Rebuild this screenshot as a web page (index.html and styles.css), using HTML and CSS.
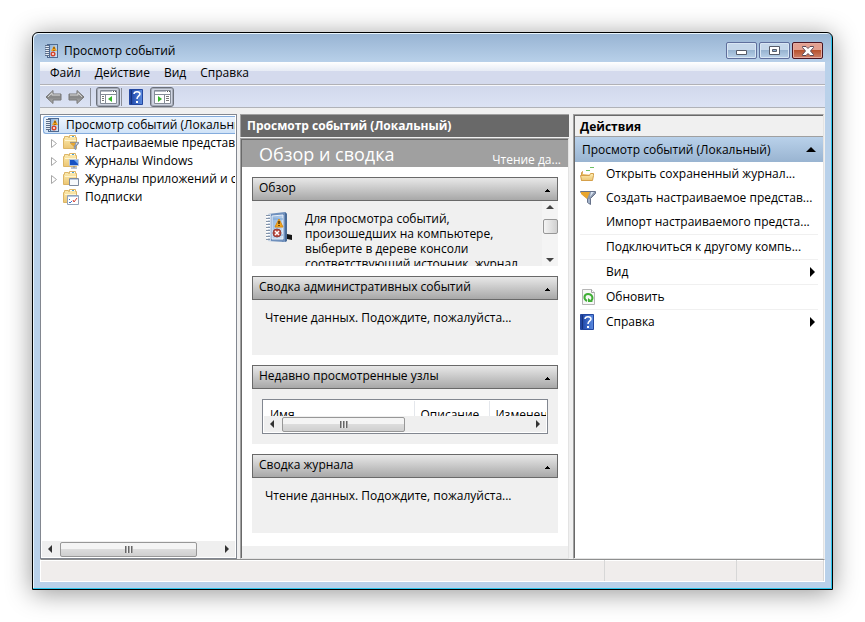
FILE: index.html
```html
<!DOCTYPE html>
<html lang="ru">
<head>
<meta charset="utf-8">
<title>Просмотр событий</title>
<link rel="stylesheet" href="styles.css">
</head>
<body>
<svg class="defs" aria-hidden="true">
  <defs>
    <linearGradient id="gold" x2="0" y2="1"><stop stop-color="#fdeeb5"/><stop offset="1" stop-color="#ecc673"/></linearGradient>
    <linearGradient id="arrow" x2="0" y2="1"><stop stop-color="#c4c4c4"/><stop offset=".5" stop-color="#858585"/><stop offset="1" stop-color="#b8b8b8"/></linearGradient>
    <linearGradient id="help" x2="1"><stop stop-color="#1d3f97"/><stop offset=".3" stop-color="#2a54b5"/><stop offset="1" stop-color="#5b8be0"/></linearGradient>
    <linearGradient id="page" x2="1" y2="1"><stop stop-color="#8fb3dc"/><stop offset="1" stop-color="#d2e4f6"/></linearGradient>
  </defs>
  <symbol id="i-book" viewBox="0 0 16 16">
    <path d="M3 1h11v14H3z" fill="#4e6a92"/><path d="M4 2h1v12H4z" fill="#dce6f2"/><path d="M6 2h7v12H6z" fill="url(#page)"/>
    <path d="M1 2.500h4M1 4.500h4M1 6.500h4M1 8.500h4M1 10.500h4M1 12.500h4" stroke="#5d6f89"/><path d="M2 3.500h2M2 5.500h2M2 7.500h2M2 9.500h2M2 11.500h2" stroke="#e9eef5"/>
    <path d="M10 2.500L13 8H7z" fill="#f2a21c"/><path d="M10 4v2M10 7v1" stroke="#5b3200"/>
    <circle cx="9" cy="11" r="2.500" fill="#d5452e"/><path d="M8 10l2 2M10 10l-2 2" stroke="#f6c9c0"/>
  </symbol>
  <symbol id="i-folder" viewBox="0 0 16 16">
    <path d="M.500 13.500v-10h1v-2h4v1h1v-2h6v2h1v11z" fill="url(#gold)" stroke="#dcb566"/><path d="M7 1.500h5" stroke="#fff"/><path d="M9 1.500h2" stroke="#4aa0d8"/><path d="M2 5.500h11" stroke="#fff5cf"/>
  </symbol>
  <symbol id="i-funnel" viewBox="0 0 16 16">
    <path d="M.500 1.500h15v2l-5 5v6l-3-2v-4l-6-5z" fill="#8b98ae" stroke="#67728a"/><path d="M1 2h9l-3 7-6-5z" fill="#e9a62e"/><path d="M11 2h3l-4 5z" fill="#d9e4f2"/><path d="M9 9v4" stroke="#b9cce4"/>
  </symbol>
  <symbol id="i-help" viewBox="0 0 14 16">
    <path d="M.500.500h13v15H.500z" fill="url(#help)" stroke="#2347a0"/><path d="M2.500 1v14" stroke="#17337e"/>
    <path d="M5 5c0-3 6-3 6 0 0 2-3 2-3 5" fill="none" stroke="#fff" stroke-width="1.500"/><path d="M7 12h2v2H7z" fill="#fff"/>
  </symbol>
  <symbol id="i-arrow" viewBox="0 0 17 16">
    <path d="M1 8l7-6.500V5h8v6H8v3.500z" fill="url(#arrow)" stroke="#777"/><path d="M3 8l4-4v2h8" fill="none" stroke="#d2d2d2"/>
  </symbol>
  <symbol id="i-pane" viewBox="0 0 17 14">
    <path d="M.500.500h16v13H.500z" fill="#fff" stroke="#858c98"/><path d="M1 1.500h11" stroke="#b5bac5"/><path d="M13 1.500h1M15 1.500h1" stroke="#555"/><path d="M1 4.500h15" stroke="#858c98"/>
  </symbol>
  <symbol id="i-tri" viewBox="0 0 5 3"><path d="M2 0h1v1h1v1h1v1H0V2h1V1h1z"/></symbol>
</svg>

<main class="window">
  <header class="titlebar">
    <svg class="ico16"><use href="#i-book"/></svg>
    <h1>Просмотр событий</h1>
    <div class="controls">
      <button class="ctl" aria-label="Свернуть"><svg class="low" width="11" height="5"><path d="M.500.500h10v4H.500z" fill="#fff" stroke="#555b68"/></svg></button>
      <button class="ctl" aria-label="Развернуть"><svg width="11" height="9"><path d="M.500.500h10v8H.500z" fill="#fff" stroke="#555b68"/><path d="M3.500 3.500h4v2h-4z" fill="#8badd0" stroke="#555b68"/></svg></button>
      <button class="ctl close" aria-label="Закрыть"><svg width="12" height="10"><path d="M.500.500h3.500L6 2.500l2-2h3.500v1l-3 3.500 3 3.500v1H8l-2-2-2 2H.500v-1l3-3.500-3-3.500z" fill="#fff" stroke="#5c4a58"/></svg></button>
    </div>
  </header>

  <div class="client">
    <nav class="menubar">
      <button>Файл</button><button>Действие</button><button>Вид</button><button>Справка</button>
    </nav>
    <div class="toolbar">
      <button class="tool" aria-label="Назад"><svg width="17" height="16"><use href="#i-arrow"/></svg></button>
      <button class="tool" aria-label="Вперед"><svg class="flip" width="17" height="16"><use href="#i-arrow"/></svg></button>
      <span class="tsep"></span>
      <button class="tool pressed" aria-label="Дерево консоли"><svg width="17" height="14"><use href="#i-pane"/><path d="M5.500 5v8M9.500 5" stroke="#858c98"/><path d="M2 6.500h2M2 8.500h2M2 10.500h2" stroke="#777"/><path d="M12 6v6L8 9z" fill="#36b52b"/></svg></button>
      <span class="tsep"></span>
      <button class="tool help" aria-label="Справка"><svg width="14" height="16"><use href="#i-help"/></svg></button>
      <button class="tool pressed" aria-label="Панель действий"><svg width="17" height="14"><use href="#i-pane"/><path d="M10.500 5v8" stroke="#858c98"/><path d="M12 6.500h3M12 8.500h3M12 10.500h3" stroke="#777"/><path d="M4 6v6l4-3z" fill="#36b52b"/></svg></button>
    </div>

    <div class="panes">
      <section class="tree">
        <ul>
          <li class="root"><svg class="ico16"><use href="#i-book"/></svg><span>Просмотр событий (Локальный)</span></li>
          <li><svg class="twist" viewBox="0 0 6 9"><path d="M.500.500v8l5-4z"/></svg><svg class="ico16"><use href="#i-folder"/><svg x="7" y="6" width="9" height="10"><use href="#i-funnel"/></svg></svg><span>Настраиваемые представления</span></li>
          <li><svg class="twist" viewBox="0 0 6 9"><path d="M.500.500v8l5-4z"/></svg><svg class="ico16"><use href="#i-folder"/><path d="M6.500 6.500h9v6h-9z" fill="#1752c4" stroke="#b9c6dc"/><path d="M11 7h4v4z" fill="#6ba5f0"/><path d="M8 15h6M11 13v2" stroke="#7d889c"/></svg><span>Журналы Windows</span></li>
          <li><svg class="twist" viewBox="0 0 6 9"><path d="M.500.500v8l5-4z"/></svg><svg class="ico16"><use href="#i-folder"/><path d="M6.500 7.500h9v7h-9z" fill="#f7f9fc" stroke="#7f8b9e"/><path d="M7 8.500h8" stroke="#bccbe0"/></svg><span>Журналы приложений и служб</span></li>
          <li><span class="twist"></span><svg class="ico16"><use href="#i-folder"/><path d="M4.500 6.500h11v9h-11z" fill="#fff" stroke="#94a2b8"/><path d="M5 7.500h10" stroke="#b8c8df"/><path d="M6 10.500h1M8 12.500h1M6 13.500h2" stroke="#3975cf"/><path d="M10 11l1 2 3-4" fill="none" stroke="#d33d33"/></svg><span>Подписки</span></li>
        </ul>
        <div class="hscroll"><i class="left"></i><b class="thumb"></b><i class="right"></i></div>
      </section>

      <section class="center">
        <h2>Просмотр событий (Локальный)</h2>
        <div class="summary">
          <div class="banner"><h3>Обзор и сводка</h3><span>Чтение да...</span></div>
          <div class="cards">
            <article class="card">
              <button class="cardhead">Обзор<svg width="5" height="3"><use href="#i-tri"/></svg></button>
              <div class="overview">
                <svg class="bigbook" viewBox="0 0 28 32"><path d="M18 25h4v-2l5 1v5l-5-1-5 3z" fill="#171717"/><path d="M3 3l17-2 2 2v27l-3 1-16-1z" fill="#6f90bd"/><path d="M20 1l2 2v27l-2 1z" fill="#4a6c98"/><path d="M3 3h3v27H3z" fill="#c7d5e6"/><path d="M7 5l11-1v24H7z" fill="url(#page)" stroke="#e8f0fa"/><path d="M8 8h10M8 24h10" stroke="#7da4d2"/><path d="M1 4.500h4M1 7.500h4M1 10.500h4M1 13.500h4M1 16.500h4M1 19.500h4M1 22.500h4M1 25.500h4M1 28.500h4" stroke="#8494aa"/><path d="M1 5.500h4M1 8.500h4M1 11.500h4M1 14.500h4M1 17.500h4M1 20.500h4M1 23.500h4M1 26.500h4" stroke="#fff"/><path d="M14 8l4 8h-8z" fill="#f4a81f" stroke="#d98a12"/><path d="M14 10v3M14 14v1" stroke="#4d2c00" stroke-width="1.500"/><circle cx="12" cy="22" r="4" fill="#b9493f" stroke="#963d36"/><path d="M10 20l4 4M14 20l-4 4" stroke="#fff" stroke-width="1.500"/></svg>
                <p>Для просмотра событий, произошедших на компьютере, выберите в дереве консоли соответствующий источник, журнал</p>
                <div class="vscroll"><i class="up"></i><b class="thumb"></b><i class="down"></i></div>
              </div>
            </article>
            <article class="card">
              <button class="cardhead">Сводка административных событий<svg width="5" height="3"><use href="#i-tri"/></svg></button>
              <p class="wait">Чтение данных. Подождите, пожалуйста...</p>
            </article>
            <article class="card">
              <button class="cardhead">Недавно просмотренные узлы<svg width="5" height="3"><use href="#i-tri"/></svg></button>
              <div class="nodes">
                <div class="listbox">
                  <div class="clip"><table><thead><tr><th class="cname">Имя</th><th class="cdesc">Описание</th><th>Изменен</th></tr></thead></table></div>
                  <div class="hscroll"><i class="left"></i><b class="thumb"></b><i class="right"></i></div>
                </div>
              </div>
            </article>
            <article class="card">
              <button class="cardhead">Сводка журнала<svg width="5" height="3"><use href="#i-tri"/></svg></button>
              <p class="wait">Чтение данных. Подождите, пожалуйста...</p>
            </article>
          </div>
          <div class="under"></div>
        </div>
      </section>

      <aside class="actions">
        <h2>Действия</h2>
        <button class="group">Просмотр событий (Локальный)<svg width="10" height="5"><path d="M5 0l5 5H0z"/></svg></button>
        <ul>
          <li><button><svg class="ico16"><path d="M1.500 14.500v-8h1v-1h4l1 1h4v8z" fill="#e9bd63" stroke="#cf9f4a"/><path d="M3 8V5h8l1 1v3z" fill="#fff"/><path d="M.500 9.500h9l1-2h3v2l-1 5H1.500z" fill="url(#gold)" stroke="#d5a04a"/><path d="M6 4.500h4M10 1.500h4" stroke="#6fc163"/></svg><span>Открыть сохраненный журнал...</span></button></li>
          <li><button><svg class="ico16"><use href="#i-funnel"/></svg><span>Создать настраиваемое представ...</span></button></li>
          <li><button><span class="ico16"></span><span>Импорт настраиваемого предста...</span></button></li>
          <li class="line"><button><span class="ico16"></span><span>Подключиться к другому компь...</span></button></li>
          <li class="line"><button><span class="ico16"></span><span>Вид</span><svg class="more" width="5" height="10"><path d="M0 0l5 5-5 5z"/></svg></button></li>
          <li class="line"><button><svg class="ico16"><path d="M2.500.500h9l3 3v12h-12z" fill="#f7f7f7" stroke="#b5b5b5"/><path d="M11.500.500v3h3" fill="#fff" stroke="#a5a5a5"/><path d="M7 12c-4-2-3-7 1-7s6 4 3 7" fill="none" stroke="#3fae35" stroke-width="2"/><path d="M8 9v4h5z" fill="#3fae35"/></svg><span>Обновить</span></button></li>
          <li class="line"><button><svg class="ico16"><svg width="14" height="16"><use href="#i-help"/></svg></svg><span>Справка</span><svg class="more" width="5" height="10"><path d="M0 0l5 5-5 5z"/></svg></button></li>
        </ul>
      </aside>
    </div>

    <footer class="status"><span></span><span></span><span></span></footer>
  </div>
</main>
</body>
</html>
```
FILE: styles.css
```css
* { box-sizing: border-box; margin: 0; padding: 0; }
body {
  display: flex;
  min-height: 100vh;
  padding: 32px;
  background: #fff;
  color: #000;
  font: 12px/16px "Open Sans", "Noto Sans", sans-serif;
}
ul { list-style: none; }
h1, h2, h3 { font-size: 12px; font-weight: 400; }
button { border: 0; background: none; color: inherit; font: inherit; text-align: left; white-space: nowrap; }
svg { flex: none; }
.defs { position: absolute; width: 0; height: 0; }
.ico16 { flex: none; width: 16px; height: 16px; }
.flip { transform: scaleX(-1); }

.window {
  flex: 1;
  min-width: 0;
  display: flex;
  flex-direction: column;
  padding: 0 7px 7px;
  border: 1px solid #000;
  border-radius: 6px 6px 0 0;
  background: linear-gradient(#97b3d2, #b9d1ea 30px, #b9d1ea);
  box-shadow: inset -1px -1px #2cc5ec, inset 1px 1px #e9f5fc, 0 3px 26px rgba(0, 0, 0, .42);
}
.titlebar { display: flex; align-items: center; gap: 4px; height: 29px; padding: 6px 2px 0; }
.titlebar h1 { flex: 1; }
.titlebar .ico16 { margin-left: 2px; }
.controls { display: flex; gap: 2px; }
.ctl {
  display: flex;
  align-items: center;
  justify-content: center;
  width: 31px;
  height: 17px;
  border: 1px solid #5f6f9c;
  border-radius: 2px;
  background: linear-gradient(#c5d7ea 45%, #98b4d1 50%, #b9d1e9);
  box-shadow: inset 0 0 0 1px #d8e6f4;
}
.ctl .low { margin-top: 4px; }
.ctl.close { border-color: #4b1420; background: linear-gradient(#e3a090 45%, #b8532f 50%, #cd8069); box-shadow: inset 0 0 0 1px #e5aba0; }

.client { flex: 1; min-width: 0; display: flex; flex-direction: column; background: #f0f0f0; }
.menubar {
  display: flex;
  height: 23px;
  padding: 0 3px;
  border-bottom: 1px solid #b1b1b6;
  background: linear-gradient(#fff, #e6ebf5 9px, #d4daed 9px, #d4daed);
}
.menubar button { padding: 0 7px; }
.toolbar {
  display: flex;
  align-items: center;
  gap: 5px;
  height: 23px;
  padding: 0 4px;
  border-top: 1px solid #f7f8fb;
  border-bottom: 1px solid #b0b2b8;
  background: linear-gradient(#d1d8ec, #dce3f4);
}
.tool { display: flex; align-items: center; justify-content: center; min-width: 18px; height: 20px; }
.tool.pressed { width: 24px; border: 1px solid #6c717b; border-radius: 3px; background: #d0d5e2; box-shadow: inset 0 0 0 1px #a4aab7; }
.tool.help { width: 24px; margin: 0 -3px; }
.tsep { width: 1px; height: 18px; background: #8a8e98; }
.tool.pressed + .tsep { margin-left: -4px; }

.panes { flex: 1; display: grid; grid-template-columns: 197px minmax(0, 329fr) minmax(0, 252fr); column-gap: 3px; padding: 6px 1px 0 0; }

.tree { display: flex; flex-direction: column; min-width: 0; border: 1px solid #828790; background: #fff; padding: 1px; }
.tree ul { flex: 1; overflow: hidden; }
.tree li { display: flex; align-items: center; height: 18px; padding-left: 8px; white-space: nowrap; overflow: hidden; }
.tree li .ico16 { margin: 0 6px 0 5px; }
.tree .twist { flex: none; width: 8px; height: 9px; fill: #fff; stroke: #a6a6a6; }
.tree .root { margin-left: 1px; padding-left: 0; border: 1px solid #84acdd; border-right: 0; border-radius: 3px 0 0 3px; background: linear-gradient(#edf5fd, #cfe2f7); }
.tree .root .ico16 { margin: 0 5px 0 1px; }

.hscroll { display: flex; align-items: center; height: 16px; background: #efefef; }
.thumb { border: 1px solid #979797; border-radius: 2px; background: linear-gradient(#f4f4f4 45%, #dcdcdc 50%, #cfcfcf); }
.hscroll .thumb { display: flex; align-items: center; justify-content: center; height: 15px; }
.hscroll .thumb::after { content: ""; width: 8px; height: 7px; background: repeating-linear-gradient(90deg, #666 0 1px, #aaa 1px 2px, #eee 2px 3px); }
.tree .hscroll .thumb { flex: 0 0 137px; }
.left, .right, .up, .down { border: 4px solid transparent; width: 0; height: 0; }
.left { margin-right: 8px; margin-left: 2px; border-right-color: #333; }
.right { margin: 0 2px 0 auto; border-left-color: #333; }
.up { border-bottom-color: #444; }
.down { border-top-color: #444; }

.center { display: flex; flex-direction: column; min-width: 0; }
.center > h2 { height: 23px; padding: 3px 6px; border: solid #a0a0a0; border-width: 1px 0 0 1px; background: #696969; color: #fff; font-weight: 700; line-height: 16px; white-space: nowrap; overflow: hidden; }
.summary { flex: 1; display: flex; flex-direction: column; margin-top: 1px; border: 1px solid #e3e3e3; border-color: #a0a0a0 #e3e3e3 #e3e3e3 #a0a0a0; box-shadow: inset 1px 1px #696969; background: #fff; padding: 1px 0 0 1px; }
.banner { display: flex; align-items: flex-end; justify-content: space-between; height: 27px; padding: 0 7px 0 17px; background: #a0a0a0; color: #fff; white-space: nowrap; }
.banner h3 { font-size: 18px; line-height: 26px; }
.banner span { line-height: 14px; }
.cards { flex: 1; display: flex; flex-direction: column; gap: 10px; padding: 10px; }
.card { background: #f0f0f0; }
.cardhead { display: flex; align-items: center; justify-content: space-between; width: 100%; height: 24px; padding: 0 7px 2px 6px; border: 1px solid #696969; background: linear-gradient(#e8e8e8, #a8a8a8); }
.cardhead svg { margin-top: 4px; }
.overview { display: flex; height: 65px; padding-left: 13px; overflow: hidden; }
.bigbook { width: 28px; height: 32px; margin: 10px 12px 0 0; }
.overview p { flex: 1; height: 65px; padding: 10px 24px 0 0; line-height: 15px; overflow: hidden; }
.vscroll { display: flex; flex-direction: column; align-items: center; width: 16px; background: #f4f4f4; }
.vscroll .thumb { width: 15px; height: 15px; margin: 10px 0 auto; background: linear-gradient(90deg, #f4f4f4, #d0d0d0); }
.wait { height: 55px; padding: 10px 13px; }
.nodes { height: 55px; padding: 10px; }
.listbox { height: 35px; padding: 1px; border: 1px solid #828790; background: #fff; }
.clip { height: 15px; overflow: hidden; }
table { width: 100%; border-collapse: collapse; table-layout: fixed; }
th { height: 24px; padding: 3px 6px 0; border-right: 1px solid #e4e7ec; font-weight: 400; text-align: left; overflow: hidden; white-space: nowrap; }
th:last-child { border: 0; padding-right: 0; }
.cname { width: 150px; }
.cdesc { width: 75px; }
.listbox .hscroll .thumb { flex: 0 0 123px; }
.under { height: 12px; background: #f0f0f0; }

.actions { min-width: 0; margin-left: 1px; border: 1px solid #e3e3e3; border-color: #a0a0a0 #e3e3e3 #e3e3e3 #a0a0a0; box-shadow: inset 1px 1px #696969; padding: 1px 0 0 1px; background: #fff; }
.actions h2 { height: 21px; padding-left: 5px; border-bottom: 1px solid #a0a0a0; background: #f0f0f0; font-weight: 700; line-height: 21px; }
.group { display: flex; align-items: center; justify-content: space-between; width: 100%; height: 25px; padding: 0 7px; background: linear-gradient(#b9d1ea, #99b4d1); }
.actions ul { padding: 0 5px; }
.actions li button { display: flex; align-items: center; width: 100%; height: 24px; }
.actions li .ico16 { margin-right: 10px; }
.actions li.line { border-top: 1px solid #f0f0f0; }
.more { margin: 0 3px 0 auto; }

.status { display: grid; grid-template-columns: minmax(0, 565fr) minmax(0, 133fr) minmax(0, 87fr); height: 23px; border: 1px solid #fff; border-top: 1px solid #8e8f8f; background: #f0edec; box-shadow: inset 0 1px #fff; }
.status span { border-right: 1px solid #d7d7d7; }
```
